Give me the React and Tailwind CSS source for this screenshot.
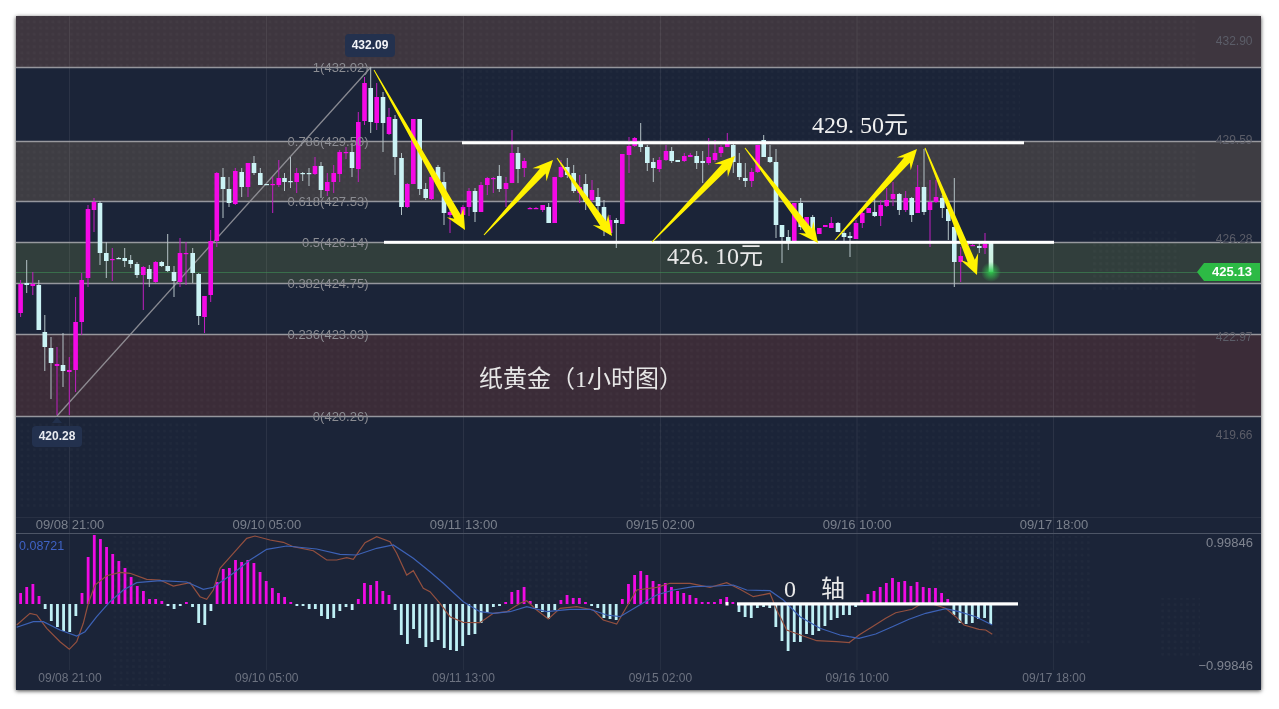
const candles = `20.6 m 280 284 313 317|26.7 c 260 283 285 293|32.8 m 272 284 286 295|38.8 c 280 285 330 330|44.8 c 315 332 347 371|51 c 337 348 363 399|57 m 347 364 366 415|63 c 333 365 371 387|69.3 m 357 370 372 415|75.6 m 297 322 370 392|81.7 m 273 280 322 335|88 m 205 209 278 287|94 m 198 202 210 232|100 c 201 203 253 265|106.3 c 242 253 261 278|112.3 m 248 259 260 281|118.7 c 257 258 259 259|124.7 c 248 258 261 267|130.7 c 255 260 264 268|137 c 262 264 275 278|143.3 m 266 267 275 310|149.3 c 265 269 279 287|155.7 m 261 262 282 283|161.7 c 261 262 266 267|167.7 c 234 266 271 272|174 c 266 272 281 297|180 m 238 253 282 287|186 m 242 253 254 285|192.7 c 248 253 273 283|198.7 c 273 274 316 325|204.5 m 296 296 317 333|210.7 m 230 241 295 302|216.8 m 172 173 241 247|223 c 168 177 189 218|229 c 177 189 203 207|235.3 m 168 171 204 205|241.7 c 168 172 187 197|248 m 163 163 187 197|254 c 156 163 173 175|260.3 c 168 173 185 185|266.7 c 184 184 185 185|272.7 m 177 184 185 213|278.8 m 160 178 185 187|284.5 c 173 178 182 191|290.5 c 157 181 182 188|296.7 m 168 173 182 193|302.7 c 172 173 174 181|309 c 168 173 174 186|315 m 157 166 174 175|321 c 162 166 190 198|327.3 m 173 182 191 196|333.7 m 165 173 182 193|339.7 m 150 152 174 182|346 m 147 152 153 159|352 c 143 152 168 177|358.3 m 112 122 169 182|364.5 m 77 83 121 125|370.7 c 67 88 122 133|376.7 m 83 97 123 130|383 c 92 97 123 152|389 m 108 117 134 135|395 c 115 119 157 175|401.5 c 153 158 207 215|407.3 m 183 184 207 208|413.3 m 119 119 184 184|419.7 c 119 119 189 195|425.7 c 183 189 198 200|431.5 m 175 177 199 200|438 c 165 167 180 186|444 c 172 182 213 225|450 m 210 212 215 233|456.5 c 210 213 216 218|463 m 205 207 215 215|469 m 188 191 207 216|475 c 188 191 212 222|481 m 182 185 212 212|487.3 m 177 178 185 195|493.3 m 177 178 179 193|499.3 c 165 176 189 192|506 m 177 183 189 207|512 m 130 153 183 183|518 c 147 153 169 183|524.3 m 158 161 168 177|530 m 207 208 209 209|536 m 207 208 209 209|542.7 m 205 205 210 212|548.7 c 203 207 223 223|554.7 m 177 177 223 223|561 m 160 167 177 178|567.3 c 158 167 175 178|573.7 c 165 173 191 193|579.7 m 175 187 193 203|585.7 c 174 184 202 210|592 m 180 190 200 202|598 c 188 197 206 213|604 c 200 207 223 236|610 m 215 220 233 235|616.3 c 218 220 223 248|622.3 m 154 154 224 224|629 m 137 146 155 173|634.7 m 137 138 146 147|640.7 c 123 143 147 152|647.3 c 145 147 163 171|653.3 c 158 162 168 182|659.3 m 157 160 169 172|666 m 145 151 160 161|671.7 c 147 151 161 163|677.7 c 160 160 162 162|684.3 m 153 156 161 162|690.3 m 153 155 157 157|696.7 c 151 156 163 169|702.7 c 151 161 163 183|708.7 m 138 157 163 165|715 m 140 153 160 162|721 m 145 147 153 157|727.3 m 133 142 147 147|733.3 c 142 145 162 173|739.3 c 153 163 177 180|745.3 c 163 178 181 187|751.7 m 168 172 181 187|757.7 m 145 145 172 173|763.7 c 135 140 157 157|770 c 145 157 162 163|776 c 149 162 225 238|782 c 225 225 237 263|788.3 c 230 237 242 250|794.3 m 203 203 242 242|800.7 c 198 203 227 230|806.7 m 217 217 227 228|812.7 c 215 217 233 237|819.3 m 228 228 234 234|825.3 m 225 225 227 227|831.3 m 217 223 228 228|838 c 222 223 232 232|844 c 230 233 237 242|850 c 232 236 238 257|856 m 220 223 239 239|862.3 m 208 213 223 228|868.7 m 208 208 213 213|874.7 c 198 212 216 217|880.7 m 200 205 216 226|886.7 m 188 200 206 207|893 m 182 194 199 206|899.3 c 193 194 210 215|905.7 m 191 198 210 212|911.7 c 197 198 215 222|917.7 m 165 187 213 213|924 c 149 187 212 215|930 m 180 202 210 247|936 m 180 197 202 203|942.3 c 195 198 208 218|948.3 c 202 209 221 240|954.3 c 178 227 262 287|960.7 m 247 256 262 282|966.7 m 243 244 245 245|972.7 m 244 245 246 246|979.3 c 243 246 248 253|985 m 233 244 248 254`
  .split("|").map((s) => { const p = s.split(" "); return { x: +p[0], k: p[1], h: +p[2], t: +p[3], b: +p[4], l: +p[5] }; });

const hist = [11,17,20,8,-5,-17,-23,-27,-28,-12,11,47,69,65,57,50,43,36,27,18,13,5,5,3,-1,-5,-1,2,-3,-19,-21,-7,22,35,36,44,42,44,41,32,23,16,11,7,1,-1,-1,-5,-5,-12,-15,-14,-7,-3,-6,5,21,19,23,13,9,-6,-31,-40,-25,-34,-43,-38,-36,-44,-46,-47,-42,-31,-30,-19,-9,-3,-1,1,12,14,17,3,-4,-8,-15,-6,4,9,6,6,1,-1,-4,-14,-15,-16,5,20,29,33,29,23,20,21,17,13,11,9,6,2,2,2,5,7,1,-8,-13,-14,-4,-3,-4,-23,-37,-47,-38,-38,-30,-31,-27,-22,-16,-14,-11,-11,-3,4,10,13,17,21,26,22,23,18,22,17,16,16,11,5,-11,-19,-20,-19,-15,-14,-20];

const z = (ox, pts) => pts.map(([x, y]) => `${(ox + x / 3).toFixed(1)},${(510 + y / 3).toFixed(1)}`).join(" ");
const orange = [
  z(0, [[50,345],[90,310],[110,315],[140,355],[180,395],[208,418],[230,395],[250,340],[265,280],[285,225],[320,197],[360,187],[390,190],[440,208],[480,210],[520,228],[570,218],[600,260],[620,268],[640,240],[660,175],[700,130],[740,85],[765,78],[810,90],[850,97],[880,110],[940,122],[980,150],[1010,150],[1040,143],[1060,148],[1095,98],[1130,80],[1170,95],[1190,130],[1220,195],[1240,182],[1270,235]]),
  z(430, [[0,245],[30,280],[60,320],[100,337],[150,338],[190,310],[230,305],[270,280],[290,272],[320,300],[355,327],[390,295],[440,290],[490,300],[520,330],[560,342],[590,290],[620,240],[680,232],[720,220],[780,220],[840,232],[890,218],[930,238],[970,260],[1020,250],[1040,300],[1070,360],[1120,378],[1160,392],[1220,395],[1260,398]]),
  z(849, [[0,398],[30,375],[70,350],[110,325],[140,308],[190,298],[215,282],[250,282],[290,295],[320,320],[345,345],[390,358],[410,360],[430,373]]),
].join(" ");
const blue = [
  z(0, [[50,352],[100,335],[130,335],[180,360],[230,378],[255,365],[290,320],[330,275],[370,240],[410,218],[480,212],[560,216],[610,238],[640,232],[700,190],[750,150],[800,118],[860,108],[950,117],[1020,133],[1070,135],[1130,115],[1180,105],[1240,145]]),
  z(430, [[0,185],[40,220],[100,275],[150,305],[190,310],[240,305],[290,290],[350,305],[420,298],[480,298],[530,315],[570,320],[620,290],[680,255],[730,240],[790,230],[860,228],[910,225],[950,240],[1020,242],[1060,270],[1110,320],[1170,355],[1230,375]]),
  z(849, [[0,380],[30,385],[80,372],[130,350],[180,328],[230,310],[290,296],[330,305],[380,320],[430,345]]),
].join(" ");

const arrows = [
  [374, 70, 465, 230],
  [484, 235, 553, 160],
  [557, 158, 612, 236],
  [652, 242, 735, 156],
  [745, 148, 818, 243],
  [835, 240, 917, 149],
  [925, 148, 977, 275],
];
function arrowPoints([x0, y0, x1, y1]) {
  const L = Math.hypot(x1 - x0, y1 - y0);
  const dx = (x1 - x0) / L, dy = (y1 - y0) / L;
  const nx = -dy, ny = dx;
  const bx = x1 - dx * 15, by = y1 - dy * 15;
  const cx = x1 - dx * 20, cy = y1 - dy * 20;
  const p = [
    [x0 + nx * 0.5, y0 + ny * 0.5],
    [bx + nx * 3.8, by + ny * 3.8],
    [cx + nx * 9.5, cy + ny * 9.5],
    [x1, y1],
    [cx - nx * 9.5, cy - ny * 9.5],
    [bx - nx * 3.8, by - ny * 3.8],
    [x0 - nx * 0.5, y0 - ny * 0.5],
  ];
  return p.map((q) => q.map((v) => v.toFixed(1)).join(",")).join(" ");
}

const grid = [69.5, 266.5, 463.5, 660.5, 857, 1053.5];
const fib = [
  [67, "1(432.02)"],
  [141, "0.786(429.50)"],
  [201, "0.618(427.53)"],
  [242, "0.5(426.14)"],
  [283, "0.382(424.75)"],
  [334, "0.236(423.03)"],
  [416, "0(420.26)"],
];
const rightAxis = [[45, "432.90"], [144, "429.59"], [243, "426.28"], [341, "422.97"], [439, "419.66"]];
const times = ["09/08 21:00", "09/10 05:00", "09/11 13:00", "09/15 02:00", "09/16 10:00", "09/17 18:00"];
const bands = [
  [16, 51, "#3e363f"],
  [141, 60, "#3e3d43"],
  [242, 41, "#313e3c"],
  [334, 82, "#3b2c38"],
];
const mapTop = [
  [16, 16, 1180, 51], [16, 141, 1180, 60], [16, 334, 1180, 82], [460, 67, 560, 74],
  [640, 420, 230, 90], [880, 420, 160, 90], [20, 420, 180, 90], [1090, 230, 90, 60],
];
const mapBottom = [
  [110, 536, 60, 150], [500, 536, 90, 70], [930, 536, 160, 110], [1160, 598, 40, 60],
];

function Dots({ id }) {
  return (
    <defs>
      <pattern id={id} width="6.2" height="6.2" patternUnits="userSpaceOnUse">
        <rect x="2" y="2" width="2.6" height="2.6" fill="#ffffff" fillOpacity="0.022" />
      </pattern>
    </defs>
  );
}

const mono = "[font-family:'Liberation_Sans',Arial,sans-serif]";

export default function App() {
  return (
    <div className="w-[1279px] h-[709px] bg-white pt-4 pl-4 overflow-hidden font-['Liberation_Sans',Arial,sans-serif]">
      <div className="relative flex flex-col w-[1245px] h-[674px] bg-[#1b2438] shadow-[0_1px_4px_rgba(0,0,0,0.75)]">
        {/* price chart */}
        <section className="relative h-[518px] border-b border-[#4d5566]">
          <svg viewBox="16 16 1245 517" className="block w-full h-full blur-[0.5px]">
            <Dots id="dotsA" />
            <defs>
              <radialGradient id="glow">
                <stop offset="0%" stopColor="#2fd24e" stopOpacity="0.9" />
                <stop offset="100%" stopColor="#2fd24e" stopOpacity="0" />
              </radialGradient>
              <linearGradient id="lastBar" x1="0" y1="0" x2="0" y2="1">
                <stop offset="0%" stopColor="#d5f3f2" />
                <stop offset="65%" stopColor="#cdf2de" />
                <stop offset="100%" stopColor="#3ccf5c" />
              </linearGradient>
            </defs>
            {bands.map(([y, h, c]) => (
              <rect key={y} x="16" y={y} width="1245" height={h} fill={c} />
            ))}
            {mapTop.map(([x, y, w, h], i) => (
              <rect key={i} x={x} y={y} width={w} height={h} fill="url(#dotsA)" />
            ))}
            {grid.map((x) => (
              <line key={x} x1={x} x2={x} y1="16" y2="533" stroke="#ffffff" strokeOpacity="0.07" />
            ))}
            <line x1="16" x2="1261" y1="517.5" y2="517.5" stroke="#ffffff" strokeOpacity="0.06" />
            {fib.map(([y]) => (
              <line key={y} x1="16" x2="1261" y1={y + 0.5} y2={y + 0.5} stroke="#a3a3a8" strokeWidth="1.3" strokeOpacity="0.9" />
            ))}
            <line x1="16" x2="1198" y1="272.5" y2="272.5" stroke="#3f8f55" strokeOpacity="0.6" />
            <line x1="57" y1="416" x2="371" y2="67" stroke="#9c9ca2" strokeWidth="1.3" strokeOpacity="0.85" />

            {candles.map((c, i) => {
              const body = c.k === "m" ? "#f409e6" : "#cbf3f5";
              const wick = c.k === "m" ? "#c01fc0" : "#b4c2c6";
              return (
                <g key={i}>
                  <line x1={c.x} x2={c.x} y1={c.h} y2={c.l} stroke={wick} strokeWidth="1" />
                  <rect x={c.x - 2.3} y={c.t} width="4.6" height={Math.max(c.b - c.t, 1.2)} fill={body} />
                </g>
              );
            })}
            <circle cx="991" cy="272" r="10" fill="url(#glow)" />
            <rect x="988.7" y="243" width="4.6" height="29" fill="url(#lastBar)" />

            <g fill="#8b8c92" fontSize="13" textAnchor="end" className={mono}>
              {fib.map(([y, t]) => (
                <text key={t} x="368.5" y={y + 4.5}>{t}</text>
              ))}
            </g>
            <g fill="#5b5d68" fontSize="12" textAnchor="end" className={mono}>
              {rightAxis.map(([y, t]) => (
                <text key={t} x="1252.5" y={y}>{t}</text>
              ))}
            </g>
            <g fill="#7a808c" fontSize="13" textAnchor="middle" className={mono}>
              {times.map((t, i) => (
                <text key={t} x={70 + i * 196.8} y="529">{t}</text>
              ))}
            </g>

            <rect x="462" y="141.3" width="562" height="3" fill="#ffffff" />
            <rect x="384" y="240.8" width="670" height="3" fill="#ffffff" />
            {arrows.map((a, i) => (
              <polygon key={i} points={arrowPoints(a)} fill="#fff200" />
            ))}
            <polygon points="57,417 52,423 62,423" fill="#22304c" />
          </svg>

          <div className="absolute left-[329px] top-[18px] w-[50px] h-[23px] rounded-sm bg-[#23314e] text-[#f4f5f8] text-xs font-bold leading-[23px] text-center blur-[0.3px]">432.09</div>
          <div className="absolute left-[16px] top-[410px] w-[50px] h-[21px] rounded-sm bg-[#23314e] text-[#e8eaef] text-xs font-bold leading-[21px] text-center blur-[0.3px]">420.28</div>
          <div className="absolute right-[1px] top-[247px] flex items-center blur-[0.3px]">
            <svg width="7" height="18" viewBox="0 0 7 18" className="block"><polygon points="7,0 0,9 7,18" fill="#2dba45" /></svg>
            <span className="w-[56px] h-[18px] bg-[#2dba45] text-white text-[13px] font-bold leading-[18px] text-center">425.13</span>
          </div>

          <div className="absolute left-[796px] top-[93px] text-[24px] leading-8 text-[#f1f1f1] whitespace-nowrap blur-[0.3px] font-['Liberation_Serif','Noto_Sans_CJK_SC',serif]">429<span className="tracking-[6px]">.</span>50元</div>
          <div className="absolute left-[651px] top-[224px] text-[24px] leading-8 text-[#e9e9e9] whitespace-nowrap blur-[0.3px] font-['Liberation_Serif','Noto_Sans_CJK_SC',serif]">426<span className="tracking-[6px]">.</span>10元</div>
          <div className="absolute left-[463px] top-[347px] text-[24px] leading-8 text-[#e6e6e6] whitespace-nowrap blur-[0.3px] font-['Liberation_Serif','Noto_Sans_CJK_SC',serif]">纸黄金（1小时图）</div>
        </section>

        {/* MACD */}
        <section className="relative flex-1">
          <svg viewBox="16 534 1245 156" className="block w-full h-full blur-[0.5px]">
            <Dots id="dotsB" />
            {mapBottom.map(([x, y, w, h], i) => (
              <rect key={i} x={x} y={y} width={w} height={h} fill="url(#dotsB)" />
            ))}
            {grid.map((x) => (
              <line key={x} x1={x} x2={x} y1="534" y2="670" stroke="#ffffff" strokeOpacity="0.05" />
            ))}
            {hist.map((v, i) => {
              const x = 20.6 + i * 6.14;
              const up = v > 0;
              const h = Math.max(Math.abs(v), 2);
              return (
                <rect key={i} x={x - 1.4} y={up ? 604 - h : 604} width="2.8" height={h} fill={up ? "#f00ae4" : "#bff0f5"} />
              );
            })}
            <polyline points={orange} fill="none" stroke="#94503f" strokeWidth="1.2" />
            <polyline points={blue} fill="none" stroke="#3d62b6" strokeWidth="1.2" />
            <rect x="737" y="602.3" width="281" height="3.2" fill="#ffffff" />
            <rect x="725.5" y="602" width="3" height="3.5" fill="#ffffff" />
            <text x="19" y="550" fontSize="12.5" fill="#3f62c4" className={mono}>0.08721</text>
            <g fill="#7f8490" fontSize="13" textAnchor="end" className={mono}>
              <text x="1253" y="547">0.99846</text>
              <text x="1253" y="670">−0.99846</text>
            </g>
            <g fill="#6c7280" fontSize="12" textAnchor="middle" className={mono}>
              {times.map((t, i) => (
                <text key={t} x={70 + i * 196.8} y="682">{t}</text>
              ))}
            </g>
          </svg>
          <div className="absolute left-[768px] top-[39px] flex gap-[25px] text-[24px] leading-8 text-[#e9e9e9] whitespace-nowrap blur-[0.3px] font-['Liberation_Serif','Noto_Sans_CJK_SC',serif]">
            <span>0</span>
            <span>轴</span>
          </div>
        </section>
      </div>
    </div>
  );
}
